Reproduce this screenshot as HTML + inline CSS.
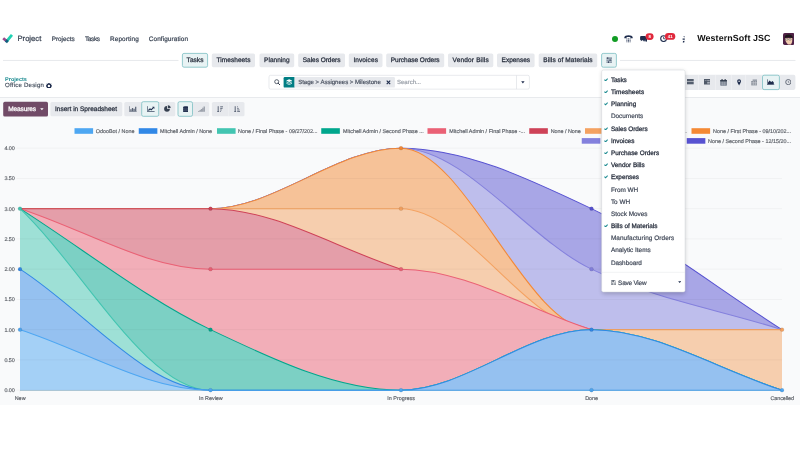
<!DOCTYPE html>
<html><head><meta charset="utf-8"><title>Project - Office Design</title>
<style>
html,body{margin:0;padding:0;background:#fff;}
body{width:800px;height:449px;position:relative;overflow:hidden;font-family:"Liberation Sans",Arial,sans-serif;-webkit-font-smoothing:antialiased;text-rendering:geometricPrecision;}
.t{position:absolute;white-space:nowrap;display:block;}
.b{position:absolute;display:block;}
</style></head><body><div id="root" style="position:absolute;left:0;top:0;width:800px;height:449px;will-change:transform;">
<svg class="b" style="left:0;top:30px" width="20" height="18" viewBox="0 30 20 18"><path d="M6.81 41.22 L11.95 34.8" stroke="#20d1b2" stroke-width="2.8" stroke-linecap="butt"/><path d="M3.2 38.2 L6.81 41.22" stroke="#9a4a8c" stroke-width="2.8"/><path d="M5.73 40.32 L7.89 42.12" stroke="#115f7e" stroke-width="2.8"/></svg>
<span id="t1" class="t " style="left:17.5px;top:33px;font-size:7.6px;line-height:12px;font-weight:400;color:#374151;-webkit-text-stroke:0.228px #374151;letter-spacing:0.018px;">Project</span>
<span id="t2" class="t " style="left:51.7px;top:34px;font-size:6.4px;line-height:12px;font-weight:400;color:#374151;-webkit-text-stroke:0.192px #374151;letter-spacing:-0.013px;">Projects</span>
<span id="t3" class="t " style="left:85px;top:34px;font-size:6.4px;line-height:12px;font-weight:400;color:#374151;-webkit-text-stroke:0.192px #374151;letter-spacing:-0.336px;">Tasks</span>
<span id="t4" class="t " style="left:110px;top:34px;font-size:6.4px;line-height:12px;font-weight:400;color:#374151;-webkit-text-stroke:0.192px #374151;letter-spacing:0.129px;">Reporting</span>
<span id="t5" class="t " style="left:148.75px;top:34px;font-size:6.4px;line-height:12px;font-weight:400;color:#374151;-webkit-text-stroke:0.192px #374151;letter-spacing:0.103px;">Configuration</span>
<div class="b" style="left:612px;top:35.6px;width:6px;height:6px;border-radius:50%;background:#119c24"></div>
<svg class="b" style="left:624.3px;top:35.2px;" width="9" height="7.8" viewBox="0 0 9 7.8">
<path d="M0.3 2.6 C0.3 0.9 2.4 0.2 4.5 0.2 C6.6 0.2 8.7 0.9 8.7 2.6 L8.7 3.3 L6.6 3.3 L6.4 2.2 C5.5 1.8 3.5 1.8 2.6 2.2 L2.4 3.3 L0.3 3.3 Z" fill="#1f2d4d"/>
<path d="M2.9 3.4 V7.3 M4.5 3.4 V7.3 M6.1 3.4 V7.3" stroke="#3a4763" stroke-width="0.95" stroke-dasharray="1.05 0.4"/>
</svg>
<svg class="b" style="left:639.6px;top:35.8px;" width="7.6" height="6.2" viewBox="0 0 7.6 6.2">
<path d="M0.1 1 Q0.1 0 1.1 0 L5 0 Q6 0 6 1 L6 3.2 Q6 4.2 5 4.2 L2.2 4.2 L0.9 5.2 L0.9 4.2 Q0.1 4.1 0.1 3.2 Z" fill="#1f2d4d"/>
<path d="M3 4.3 L5.9 4.3 L5.9 1.9 L6.8 1.9 Q7.4 1.9 7.4 2.5 L7.4 4.6 Q7.4 5.2 6.8 5.2 L6.6 5.2 L6.6 6.1 L5.6 5.2 L3.6 5.2 Q3 5.2 3 4.6 Z" fill="#1f2d4d"/>
</svg>
<svg class="b" style="left:644px;top:32px" width="11" height="9"><rect x="1.60" y="1.20" width="8.00" height="6.70" rx="3.40" fill="#e0283c"/></svg>
<span id="t6" class="t " style="left:648.5px;top:31px;font-size:4.3px;line-height:12px;font-weight:700;color:#fff;letter-spacing:-0.091px;">8</span>
<svg class="b" style="left:659.8px;top:35.3px;" width="7.2" height="7.2" viewBox="0 0 7.2 7.2"><circle cx="3.6" cy="3.6" r="2.9" fill="none" stroke="#1f2d4d" stroke-width="1.1"/><path d="M3.6 1.8 V3.8 H5" fill="none" stroke="#1f2d4d" stroke-width="0.8"/></svg>
<svg class="b" style="left:663px;top:32px" width="14" height="9"><rect x="1.90" y="1.10" width="10.40" height="6.70" rx="3.40" fill="#e0283c"/></svg>
<span id="t7" class="t " style="left:667.7px;top:31px;font-size:4.3px;line-height:12px;font-weight:700;color:#fff;letter-spacing:0.119px;">41</span>
<svg class="b" style="left:681.6px;top:35.6px;" width="3.4" height="7" viewBox="0 0 3.4 7"><path d="M1.2 0.6 L2.8 0.2 L2.4 1.6 Z M0.6 2.6 H2.8 V3.8 H0.6 Z M1 5 L2.6 4.8 L2.2 6.6 L0.8 6.4 Z" fill="#1f2d4d"/></svg>
<span id="t8" class="t " style="left:697.2px;top:32px;font-size:8.9px;line-height:12px;font-weight:700;color:#111;letter-spacing:0.104px;">WesternSoft JSC</span>
<svg class="b" style="left:782.9px;top:32.8px;" width="11.5" height="11.9" viewBox="0 0 11.5 11.9">
<rect x="0" y="0" width="11.5" height="11.9" rx="1.7" fill="#4f2145"/>
<path d="M2.2 5 Q2 9 5 11.4 L8 11.4 Q9.6 9 9.4 5 Z" fill="#f1cdb0"/>
<path d="M1.6 5.6 Q1.2 1.6 5.6 1.5 Q10 1.6 9.8 5.4 Q8.2 4 5.6 4.3 Q3 4 1.6 5.6Z" fill="#1c1718"/>
<rect x="2.6" y="5.4" width="2.3" height="1.6" rx="0.5" fill="#fff" fill-opacity=".6" stroke="#222" stroke-width="0.4"/>
<rect x="5.8" y="5.4" width="2.3" height="1.6" rx="0.5" fill="#fff" fill-opacity=".6" stroke="#222" stroke-width="0.4"/>

</svg>
<svg class="b" style="left:2px;top:58px" width="178" height="4"><rect x="1.00" y="1.95" width="175.50" height="0.80" rx="0.00" fill="#e1e4e8"/></svg>
<svg class="b" style="left:619px;top:58px" width="178" height="4"><rect x="1.00" y="1.95" width="175.50" height="0.80" rx="0.00" fill="#e1e4e8"/></svg>
<svg class="b" style="left:181px;top:52px" width="28" height="17"><rect x="1.40" y="1.40" width="25.20" height="13.80" rx="1.60" fill="#e8f3f4" stroke="#7cbfc3" stroke-width="0.8"/></svg>
<span id="t9" class="t " style="left:186.6px;top:55px;font-size:6.5px;line-height:12px;font-weight:400;color:#2b3240;-webkit-text-stroke:0.273px #2b3240;letter-spacing:0.044px;">Tasks</span>
<svg class="b" style="left:210px;top:52px" width="46" height="17"><rect x="1.80" y="1.40" width="43.20" height="13.80" rx="1.60" fill="#e7e9ed"/></svg>
<span id="t10" class="t " style="left:216.4px;top:55px;font-size:6.5px;line-height:12px;font-weight:400;color:#2b3240;-webkit-text-stroke:0.273px #2b3240;letter-spacing:0.071px;">Timesheets</span>
<svg class="b" style="left:258px;top:52px" width="38" height="17"><rect x="1.50" y="1.40" width="34.70" height="13.80" rx="1.60" fill="#e7e9ed"/></svg>
<span id="t11" class="t " style="left:264.1px;top:55px;font-size:6.5px;line-height:12px;font-weight:400;color:#2b3240;-webkit-text-stroke:0.273px #2b3240;letter-spacing:0.027px;">Planning</span>
<svg class="b" style="left:297px;top:52px" width="49" height="17"><rect x="1.20" y="1.40" width="46.80" height="13.80" rx="1.60" fill="#e7e9ed"/></svg>
<span id="t12" class="t " style="left:302.8px;top:55px;font-size:6.5px;line-height:12px;font-weight:400;color:#2b3240;-webkit-text-stroke:0.273px #2b3240;letter-spacing:-0.031px;">Sales Orders</span>
<svg class="b" style="left:347px;top:52px" width="37" height="17"><rect x="1.80" y="1.40" width="33.70" height="13.80" rx="1.60" fill="#e7e9ed"/></svg>
<span id="t13" class="t " style="left:353.40000000000003px;top:55px;font-size:6.5px;line-height:12px;font-weight:400;color:#2b3240;-webkit-text-stroke:0.273px #2b3240;letter-spacing:0.092px;">Invoices</span>
<svg class="b" style="left:385px;top:52px" width="61" height="17"><rect x="1.20" y="1.40" width="58.00" height="13.80" rx="1.60" fill="#e7e9ed"/></svg>
<span id="t14" class="t " style="left:390.8px;top:55px;font-size:6.5px;line-height:12px;font-weight:400;color:#2b3240;-webkit-text-stroke:0.273px #2b3240;letter-spacing:-0.024px;">Purchase Orders</span>
<svg class="b" style="left:447px;top:52px" width="48" height="17"><rect x="1.00" y="1.40" width="45.30" height="13.80" rx="1.60" fill="#e7e9ed"/></svg>
<span id="t15" class="t " style="left:452.6px;top:55px;font-size:6.5px;line-height:12px;font-weight:400;color:#2b3240;-webkit-text-stroke:0.273px #2b3240;letter-spacing:0.161px;">Vendor Bills</span>
<svg class="b" style="left:496px;top:52px" width="40" height="17"><rect x="1.00" y="1.40" width="37.60" height="13.80" rx="1.60" fill="#e7e9ed"/></svg>
<span id="t16" class="t " style="left:501.6px;top:55px;font-size:6.5px;line-height:12px;font-weight:400;color:#2b3240;-webkit-text-stroke:0.273px #2b3240;letter-spacing:-0.021px;">Expenses</span>
<svg class="b" style="left:537px;top:52px" width="62" height="17"><rect x="1.70" y="1.40" width="58.50" height="13.80" rx="1.60" fill="#e7e9ed"/></svg>
<span id="t17" class="t " style="left:543.3000000000001px;top:55px;font-size:6.5px;line-height:12px;font-weight:400;color:#2b3240;-webkit-text-stroke:0.273px #2b3240;letter-spacing:0.116px;">Bills of Materials</span>
<svg class="b" style="left:600px;top:52px" width="18" height="17"><rect x="1.60" y="1.40" width="14.80" height="13.80" rx="1.60" fill="#e8f3f4" stroke="#7cbfc3" stroke-width="0.8"/></svg>
<svg class="b" style="left:605.8px;top:57.3px;" width="6.6" height="6.2" viewBox="0 0 6.6 6.2"><path d="M0.4 1.1 H6.2 M0.4 3.1 H6.2 M0.4 5.1 H6.2" stroke="#1f2d4d" stroke-width="0.75"/>
<rect x="1.2" y="0.45" width="1" height="1.3" fill="#1f2d4d"/><rect x="3.6" y="2.45" width="1" height="1.3" fill="#1f2d4d"/><rect x="2" y="4.45" width="1" height="1.3" fill="#1f2d4d"/></svg>
<span id="t18" class="t " style="left:5.1px;top:74px;font-size:5.5px;line-height:12px;font-weight:700;color:#1a8a90;letter-spacing:0.012px;">Projects</span>
<span id="t19" class="t " style="left:5.1px;top:80px;font-size:6.1px;line-height:12px;font-weight:400;color:#4b5563;-webkit-text-stroke:0.183px #4b5563;letter-spacing:0.194px;">Office Design</span>
<svg class="b" style="left:45.9px;top:82.6px;" width="5.8" height="5.8" viewBox="0 0 5.8 5.8"><circle cx="2.9" cy="2.9" r="1.9" fill="none" stroke="#1f2d4d" stroke-width="1.4"/>
<path d="M2.9 0 V5.8 M0 2.9 H5.8 M0.85 0.85 L4.95 4.95 M4.95 0.85 L0.85 4.95" stroke="#1f2d4d" stroke-width="1" stroke-dasharray="0.9 4"/></svg>
<svg class="b" style="left:267px;top:74px" width="264" height="17"><rect x="2.00" y="1.30" width="260.40" height="13.85" rx="1.60" fill="#fff" stroke="#d9dce1" stroke-width="0.6"/></svg>
<svg class="b" style="left:273.6px;top:78.8px;" width="6.6" height="6.6" viewBox="0 0 6.6 6.6"><circle cx="2.7" cy="2.7" r="2" fill="none" stroke="#374151" stroke-width="0.8"/><path d="M4.2 4.2 L6 6" stroke="#374151" stroke-width="1" stroke-linecap="round"/></svg>
<svg class="b" style="left:282px;top:76px" width="14" height="13"><path d="M2.80 1.10 H12.60 Q12.60 1.10 12.60 1.10 V11.60 Q12.60 11.60 12.60 11.60 H2.80 Q1.60 11.60 1.60 10.40 V2.30 Q1.60 1.10 2.80 1.10 Z" fill="#017e84"/></svg>
<svg class="b" style="left:285.9px;top:79.4px;" width="6.4" height="6" viewBox="0 0 6.4 6"><path d="M3.2 0.2 L6.2 1.6 L3.2 3 L0.2 1.6 Z" fill="#fff"/><path d="M0.4 2.9 L3.2 4.2 L6 2.9 M0.4 4.3 L3.2 5.6 L6 4.3" fill="none" stroke="#fff" stroke-width="0.7"/></svg>
<svg class="b" style="left:293px;top:76px" width="103" height="13"><path d="M1.60 1.10 H100.70 Q101.90 1.10 101.90 2.30 V10.40 Q101.90 11.60 100.70 11.60 H1.60 Q1.60 11.60 1.60 11.60 V1.10 Q1.60 1.10 1.60 1.10 Z" fill="#e7e9ed"/></svg>
<span id="t20" class="t " style="left:298.2px;top:77px;font-size:6.1px;line-height:12px;font-weight:400;color:#4a5261;-webkit-text-stroke:0.183px #4a5261;letter-spacing:-0.039px;">Stage &gt; Assignees &gt; Milestone</span>
<svg class="b" style="left:385.6px;top:80.1px;" width="5" height="5" viewBox="0 0 5 5"><path d="M0.7 0.7 L4.2 4.2 M4.2 0.7 L0.7 4.2" stroke="#1f2d4d" stroke-width="1.15"/></svg>
<span id="t21" class="t " style="left:397px;top:77px;font-size:6.1px;line-height:12px;font-weight:400;color:#9aa0a9;-webkit-text-stroke:0.183px #9aa0a9;letter-spacing:-0.049px;">Search...</span>
<svg class="b" style="left:515px;top:74px" width="3" height="17"><rect x="1.30" y="1.40" width="0.60" height="13.70" rx="0.00" fill="#d9dce1"/></svg>
<svg class="b" style="left:521.2px;top:81px;" width="3.8" height="2.6" viewBox="0 0 3.8 2.6"><path d="M0.2 0.3 L3.6 0.3 L1.9 2.4 Z" fill="#1f2d4d"/></svg>
<svg class="b" style="left:682px;top:73px" width="115" height="18"><rect x="1.00" y="1.85" width="112.40" height="15.05" rx="1.80" fill="#e7e9ed"/></svg>
<svg class="b" style="left:697px;top:73px" width="3" height="18"><rect x="1.00" y="1.85" width="0.60" height="15.05" rx="0.00" fill="#f3f4f6"/></svg>
<svg class="b" style="left:714px;top:73px" width="3" height="18"><rect x="1.20" y="1.85" width="0.60" height="15.05" rx="0.00" fill="#f3f4f6"/></svg>
<svg class="b" style="left:730px;top:73px" width="3" height="18"><rect x="1.10" y="1.85" width="0.60" height="15.05" rx="0.00" fill="#f3f4f6"/></svg>
<svg class="b" style="left:744px;top:73px" width="3" height="18"><rect x="1.20" y="1.85" width="0.60" height="15.05" rx="0.00" fill="#f3f4f6"/></svg>
<svg class="b" style="left:760px;top:73px" width="4" height="18"><rect x="1.80" y="1.85" width="0.60" height="15.05" rx="0.00" fill="#f3f4f6"/></svg>
<svg class="b" style="left:778px;top:73px" width="4" height="18"><rect x="1.50" y="1.85" width="0.60" height="15.05" rx="0.00" fill="#f3f4f6"/></svg>
<svg class="b" style="left:761px;top:73px" width="20" height="18"><rect x="1.50" y="2.20" width="16.90" height="14.40" rx="1.60" fill="#e8f3f4" stroke="#7cbfc3" stroke-width="0.8"/></svg>
<svg class="b" style="left:687px;top:79.4px;" width="6.8" height="5.8" viewBox="0 0 6.8 5.8"><rect x="0" y="-0.2" width="6.7" height="2.5" fill="#545e6e"/><rect x="0" y="2.8" width="6.7" height="2.5" fill="#545e6e"/></svg>
<svg class="b" style="left:703.8px;top:79.3px;" width="6.6" height="5.8" viewBox="0 0 6.6 5.8"><rect x="0" y="0" width="6.5" height="5.5" fill="#4f5968"/><rect x="3.2" y="1.2" width="2.6" height="0.8" fill="#aab0ba"/><rect x="3.2" y="2.8" width="2.6" height="1.8" fill="#aab0ba"/><rect x="0.8" y="1.2" width="1.8" height="0.8" fill="#8b929d"/></svg>
<svg class="b" style="left:720.1px;top:78.7px;" width="7.2" height="7" viewBox="0 0 7.2 7"><rect x="0.2" y="1" width="6.8" height="5.8" rx="0.7" fill="#7a8391"/><rect x="0.2" y="1" width="6.8" height="1.4" fill="#3d4656"/><rect x="1.5" y="0" width="1.1" height="1.8" fill="#2b3445"/><rect x="4.6" y="0" width="1.1" height="1.8" fill="#2b3445"/><path d="M0.8 3.9 H6.4 M0.8 5.3 H6.4 M2.6 2.8 V6.5 M4.6 2.8 V6.5" stroke="#b9bec7" stroke-width="0.35"/></svg>
<svg class="b" style="left:736.9px;top:78.8px;" width="4.2" height="6.8" viewBox="0 0 4.2 6.8"><path d="M2.1 0.2 C3.3 0.2 4 1.1 4 2.2 C4 3.6 2.6 5.2 2.1 6.6 C1.6 5.2 0.2 3.6 0.2 2.2 C0.2 1.1 0.9 0.2 2.1 0.2 Z" fill="#1f2d4d"/><circle cx="2.1" cy="2.2" r="0.8" fill="#e7e9ed"/></svg>
<svg class="b" style="left:750.6px;top:78.8px;" width="6.8" height="6.8" viewBox="0 0 6.8 6.8"><rect x="1.6" y="0.4" width="4.6" height="2" fill="#9aa1ab"/><rect x="0.2" y="2" width="6.4" height="4.4" fill="#8b929d"/><path d="M0.2 3.5 H6.6 M0.2 5 H6.6 M2.4 2 V6.4 M4.5 2 V6.4" stroke="#d6d9de" stroke-width="0.4"/></svg>
<svg class="b" style="left:767.2px;top:79px;" width="7.6" height="6.4" viewBox="0 0 7.6 6.4"><path d="M0.3 0.3 V6 H7.4" fill="none" stroke="#1f2d4d" stroke-width="0.7"/><path d="M1 5.4 L1 3.4 L2.6 1.6 L4.2 3 L5.6 1.9 L6.8 3.4 L6.8 5.4 Z" fill="#1f2d4d"/></svg>
<svg class="b" style="left:784.6px;top:78.9px;" width="6.6" height="6.6" viewBox="0 0 6.6 6.6"><circle cx="3.3" cy="3.1" r="2.6" fill="none" stroke="#414a5a" stroke-width="0.75"/><path d="M3.3 1.8 V3.3 H4.3" fill="none" stroke="#414a5a" stroke-width="0.55"/></svg>
<div class="b" style="left:0px;top:96.7px;width:800px;height:308.3px;background:#f9fafb;border-top:0.6px solid #e8eaed;box-sizing:border-box;z-index:-1;"></div>
<svg class="b" style="left:2px;top:100px" width="47" height="18"><rect x="1.20" y="1.80" width="44.80" height="14.70" rx="1.60" fill="#714b67"/></svg>
<span id="t22" class="t " style="left:8.3px;top:104px;font-size:6.5px;line-height:12px;font-weight:400;color:#fff;-webkit-text-stroke:0.273px #fff;letter-spacing:-0.107px;">Measures</span>
<svg class="b" style="left:39.8px;top:108px;" width="3.8" height="2.6" viewBox="0 0 3.8 2.6"><path d="M0.2 0.3 L3.6 0.3 L1.9 2.3 Z" fill="#fff"/></svg>
<svg class="b" style="left:49px;top:101px" width="75" height="17"><rect x="1.40" y="1.00" width="71.90" height="14.30" rx="1.60" fill="#e7e9ed"/></svg>
<span id="t23" class="t " style="left:55px;top:104px;font-size:6.5px;line-height:12px;font-weight:400;color:#2b3240;-webkit-text-stroke:0.273px #2b3240;letter-spacing:0.01px;">Insert in Spreadsheet</span>
<svg class="b" style="left:123px;top:100px" width="54" height="18"><rect x="1.30" y="1.90" width="51.00" height="14.40" rx="1.60" fill="#e7e9ed"/></svg>
<svg class="b" style="left:140px;top:100px" width="21" height="18"><rect x="1.70" y="1.70" width="17.00" height="14.60" rx="1.60" fill="#e8f3f4" stroke="#7cbfc3" stroke-width="0.8"/></svg>
<svg class="b" style="left:129px;top:105.8px;" width="7.8" height="6" viewBox="0 0 7.8 6"><path d="M0.4 0.2 V5.6 H7.7" fill="none" stroke="#5b6577" stroke-width="0.65"/><path d="M1.9 5.2 V3.2 M3.5 5.2 V1.9 M5.1 5.2 V2.8 M6.7 5.2 V0.8" stroke="#5b6577" stroke-width="1.25"/></svg>
<svg class="b" style="left:146.9px;top:105.8px;" width="7.8" height="6" viewBox="0 0 7.8 6"><path d="M0.3 0.2 V5.6 H7.6" fill="none" stroke="#1f2d4d" stroke-width="0.7"/><path d="M1.4 4.5 L3 2.9 L4.2 3.8 L6.6 1.4" fill="none" stroke="#1f2d4d" stroke-width="1.15"/><path d="M5.2 0.7 H7.4 V2.9 Z" fill="#1f2d4d"/></svg>
<svg class="b" style="left:164.4px;top:105.4px;" width="6.8" height="6.8" viewBox="0 0 6.8 6.8"><path d="M3 0.9 V3.8 H5.9 A2.9 2.9 0 1 1 3 0.9 Z" fill="#374151"/><path d="M3.8 0.2 A2.9 2.9 0 0 1 6.7 3.1 H3.8 Z" fill="#374151"/></svg>
<svg class="b" style="left:176px;top:100px" width="35" height="18"><rect x="1.80" y="1.90" width="31.40" height="14.40" rx="1.60" fill="#e7e9ed"/></svg>
<svg class="b" style="left:176px;top:100px" width="18" height="18"><rect x="2.00" y="1.70" width="14.50" height="14.60" rx="1.60" fill="#e8f3f4" stroke="#7cbfc3" stroke-width="0.8"/></svg>
<svg class="b" style="left:182.6px;top:105.6px;" width="5.6" height="6.6" viewBox="0 0 5.6 6.6"><path d="M0.1 1.1 C0.1 -0.2 5.5 -0.2 5.5 1.1 V5.5 C5.5 6.8 0.1 6.8 0.1 5.5 Z" fill="#1f2d4d"/><path d="M0.1 2.5 C0.9 3.3 4.7 3.3 5.5 2.5 M0.1 4.2 C0.9 5 4.7 5 5.5 4.2" fill="none" stroke="#7d8697" stroke-width="0.45"/></svg>
<svg class="b" style="left:198.4px;top:105.8px;" width="6.8" height="6" viewBox="0 0 6.8 6"><path d="M0.1 5.8 V5 H1.4 V4 H2.8 V2.9 H4.2 V1.7 H5.5 V0.4 H6.8 V5.8 Z" fill="#8d939e"/><path d="M1.4 4 V5.8 M2.8 2.9 V5.8 M4.2 1.7 V5.8 M5.5 0.4 V5.8" stroke="#e7e9ed" stroke-width="0.3"/></svg>
<svg class="b" style="left:210px;top:100px" width="36" height="18"><rect x="1.90" y="1.90" width="32.60" height="14.40" rx="1.60" fill="#e7e9ed"/></svg>
<svg class="b" style="left:227px;top:100px" width="3" height="18"><rect x="1.00" y="1.90" width="0.40" height="14.40" rx="0.00" fill="#f4f5f7"/></svg>
<svg class="b" style="left:216.6px;top:105.6px;" width="6.4" height="6.8" viewBox="0 0 6.4 6.8"><path d="M1.2 0.2 V6.2" fill="none" stroke="#5b6577" stroke-width="1"/><path d="M0 4.9 L1.2 6.6 L2.4 4.9Z" fill="#5b6577"/><path d="M3.2 0.8 H6.4 M3.2 2.4 H5.6 M3.2 4 H4.7 M3.2 5.6 H4" stroke="#5b6577" stroke-width="0.9"/></svg>
<svg class="b" style="left:233.6px;top:105.6px;" width="6.4" height="6.8" viewBox="0 0 6.4 6.8"><path d="M1.2 0.2 V6.2" fill="none" stroke="#5b6577" stroke-width="1"/><path d="M0 4.9 L1.2 6.6 L2.4 4.9Z" fill="#5b6577"/><path d="M3.2 0.8 H4 M3.2 2.4 H4.7 M3.2 4 H5.6 M3.2 5.6 H6.4" stroke="#5b6577" stroke-width="0.9"/></svg>
<svg class="b" style="left:0;top:0" width="800" height="449" viewBox="0 0 800 449"><path d="M20 208.65C83.5 208.65 147 208.65 210.5 208.65C274 208.65 337.5 148.15 401 148.15C464.5 148.15 528 178.4 591.5 208.65C655 238.9 718.5 289.32 782 329.65L782 390.15L20 390.15Z" fill="#a8a6e6"/>
<path d="M20 208.65C83.5 208.65 147 208.65 210.5 208.65C274 208.65 337.5 148.15 401 148.15C464.5 148.15 528 178.4 591.5 208.65C655 238.9 718.5 289.32 782 329.65" fill="none" stroke="#5752D1" stroke-width="1.05"/>
<circle cx="591.5" cy="208.65" r="1.9" fill="#5752D1" stroke="rgba(0,0,0,0.2)" stroke-width="0.45"/>
<path d="M20 208.65C83.5 208.65 147 208.65 210.5 208.65C274 208.65 337.5 148.15 401 148.15C464.5 148.15 528 238.9 591.5 269.15C655 299.4 718.5 309.48 782 329.65L782 390.15L20 390.15Z" fill="#bebeec"/>
<path d="M20 208.65C83.5 208.65 147 208.65 210.5 208.65C274 208.65 337.5 148.15 401 148.15C464.5 148.15 528 238.9 591.5 269.15C655 299.4 718.5 309.48 782 329.65" fill="none" stroke="#8481DD" stroke-width="1.05"/>
<circle cx="591.5" cy="269.15" r="1.9" fill="#8481DD" stroke="rgba(0,0,0,0.2)" stroke-width="0.45"/>
<path d="M20 208.65C83.5 208.65 147 208.65 210.5 208.65C274 208.65 337.5 148.15 401 148.15C464.5 148.15 528 329.65 591.5 329.65C655 329.65 718.5 329.65 782 329.65L782 390.15L20 390.15Z" fill="#f6c298"/>
<path d="M20 208.65C83.5 208.65 147 208.65 210.5 208.65C274 208.65 337.5 148.15 401 148.15C464.5 148.15 528 329.65 591.5 329.65C655 329.65 718.5 329.65 782 329.65" fill="none" stroke="#F48935" stroke-width="1.05"/>
<circle cx="401" cy="148.15" r="1.9" fill="#F48935" stroke="rgba(0,0,0,0.2)" stroke-width="0.45"/>
<path d="M20 208.65C83.5 208.65 147 208.65 210.5 208.65C274 208.65 337.5 208.65 401 208.65C464.5 208.65 528 329.65 591.5 329.65C655 329.65 718.5 329.65 782 329.65L782 390.15L20 390.15Z" fill="#f6ceae"/>
<path d="M20 208.65C83.5 208.65 147 208.65 210.5 208.65C274 208.65 337.5 208.65 401 208.65C464.5 208.65 528 329.65 591.5 329.65C655 329.65 718.5 329.65 782 329.65" fill="none" stroke="#F4A261" stroke-width="1.05"/>
<circle cx="401" cy="208.65" r="1.9" fill="#F4A261" stroke="rgba(0,0,0,0.2)" stroke-width="0.45"/>
<circle cx="782" cy="329.65" r="1.9" fill="#F4A261" stroke="rgba(0,0,0,0.2)" stroke-width="0.45"/>
<path d="M20 208.65C83.5 208.65 147 208.65 210.5 208.65C274 208.65 337.5 248.98 401 269.15C464.5 289.32 528 309.48 591.5 329.65C655 349.82 718.5 369.98 782 390.15L782 390.15L20 390.15Z" fill="#e49ea9"/>
<path d="M20 208.65C83.5 208.65 147 208.65 210.5 208.65C274 208.65 337.5 248.98 401 269.15C464.5 289.32 528 309.48 591.5 329.65C655 349.82 718.5 369.98 782 390.15" fill="none" stroke="#CE4257" stroke-width="1.05"/>
<circle cx="210.5" cy="208.65" r="1.9" fill="#CE4257" stroke="rgba(0,0,0,0.2)" stroke-width="0.45"/>
<path d="M20 208.65C83.5 228.82 147 269.15 210.5 269.15C274 269.15 337.5 269.15 401 269.15C464.5 269.15 528 309.48 591.5 329.65C655 349.82 718.5 369.98 782 390.15L782 390.15L20 390.15Z" fill="#f2aeb8"/>
<path d="M20 208.65C83.5 228.82 147 269.15 210.5 269.15C274 269.15 337.5 269.15 401 269.15C464.5 269.15 528 309.48 591.5 329.65C655 349.82 718.5 369.98 782 390.15" fill="none" stroke="#EA6175" stroke-width="1.05"/>
<circle cx="210.5" cy="269.15" r="1.9" fill="#EA6175" stroke="rgba(0,0,0,0.2)" stroke-width="0.45"/>
<circle cx="401" cy="269.15" r="1.9" fill="#EA6175" stroke="rgba(0,0,0,0.2)" stroke-width="0.45"/>
<path d="M20 208.65C83.5 248.98 147 299.4 210.5 329.65C274 359.9 337.5 390.15 401 390.15C464.5 390.15 528 329.65 591.5 329.65C655 329.65 718.5 369.98 782 390.15L782 390.15L20 390.15Z" fill="#7cd0c4"/>
<path d="M20 208.65C83.5 248.98 147 299.4 210.5 329.65C274 359.9 337.5 390.15 401 390.15C464.5 390.15 528 329.65 591.5 329.65C655 329.65 718.5 369.98 782 390.15" fill="none" stroke="#00A78D" stroke-width="1.05"/>
<circle cx="210.5" cy="329.65" r="1.9" fill="#00A78D" stroke="rgba(0,0,0,0.2)" stroke-width="0.45"/>
<path d="M20 208.65C83.5 269.15 147 390.15 210.5 390.15C274 390.15 337.5 390.15 401 390.15C464.5 390.15 528 329.65 591.5 329.65C655 329.65 718.5 369.98 782 390.15L782 390.15L20 390.15Z" fill="#9ee0d6"/>
<path d="M20 208.65C83.5 269.15 147 390.15 210.5 390.15C274 390.15 337.5 390.15 401 390.15C464.5 390.15 528 329.65 591.5 329.65C655 329.65 718.5 369.98 782 390.15" fill="none" stroke="#43C5B1" stroke-width="1.05"/>
<circle cx="20" cy="208.65" r="1.9" fill="#43C5B1" stroke="rgba(0,0,0,0.2)" stroke-width="0.45"/>
<path d="M20 269.15C83.5 309.48 147 390.15 210.5 390.15C274 390.15 337.5 390.15 401 390.15C464.5 390.15 528 329.65 591.5 329.65C655 329.65 718.5 369.98 782 390.15L782 390.15L20 390.15Z" fill="#95c1f0"/>
<path d="M20 269.15C83.5 309.48 147 390.15 210.5 390.15C274 390.15 337.5 390.15 401 390.15C464.5 390.15 528 329.65 591.5 329.65C655 329.65 718.5 369.98 782 390.15" fill="none" stroke="#3188E6" stroke-width="1.05"/>
<circle cx="20" cy="269.15" r="1.9" fill="#3188E6" stroke="rgba(0,0,0,0.2)" stroke-width="0.45"/>
<circle cx="591.5" cy="329.65" r="1.9" fill="#3188E6" stroke="rgba(0,0,0,0.2)" stroke-width="0.45"/>
<path d="M20 329.65C83.5 349.82 147 390.15 210.5 390.15C274 390.15 337.5 390.15 401 390.15C464.5 390.15 528 390.15 591.5 390.15C655 390.15 718.5 390.15 782 390.15L782 390.15L20 390.15Z" fill="#a4d0f6"/>
<path d="M20 329.65C83.5 349.82 147 390.15 210.5 390.15C274 390.15 337.5 390.15 401 390.15C464.5 390.15 528 390.15 591.5 390.15C655 390.15 718.5 390.15 782 390.15" fill="none" stroke="#4EA7F2" stroke-width="1.05"/>
<circle cx="20" cy="329.65" r="1.9" fill="#4EA7F2" stroke="rgba(0,0,0,0.2)" stroke-width="0.45"/>
<circle cx="210.5" cy="390.15" r="1.9" fill="#4EA7F2" stroke="rgba(0,0,0,0.2)" stroke-width="0.45"/>
<circle cx="401" cy="390.15" r="1.9" fill="#4EA7F2" stroke="rgba(0,0,0,0.2)" stroke-width="0.45"/>
<circle cx="591.5" cy="390.15" r="1.9" fill="#4EA7F2" stroke="rgba(0,0,0,0.2)" stroke-width="0.45"/>
<circle cx="782" cy="390.15" r="1.9" fill="#4EA7F2" stroke="rgba(0,0,0,0.2)" stroke-width="0.45"/>
<path d="M16.4 390.15 H782" stroke="#000" stroke-opacity="0.07" stroke-width="0.5"/>
<path d="M16.4 359.90 H782" stroke="#000" stroke-opacity="0.07" stroke-width="0.5"/>
<path d="M16.4 329.65 H782" stroke="#000" stroke-opacity="0.07" stroke-width="0.5"/>
<path d="M16.4 299.40 H782" stroke="#000" stroke-opacity="0.07" stroke-width="0.5"/>
<path d="M16.4 269.15 H782" stroke="#000" stroke-opacity="0.07" stroke-width="0.5"/>
<path d="M16.4 238.90 H782" stroke="#000" stroke-opacity="0.07" stroke-width="0.5"/>
<path d="M16.4 208.65 H782" stroke="#000" stroke-opacity="0.07" stroke-width="0.5"/>
<path d="M16.4 178.40 H782" stroke="#000" stroke-opacity="0.07" stroke-width="0.5"/>
<path d="M16.4 148.15 H782" stroke="#000" stroke-opacity="0.07" stroke-width="0.5"/>
<path d="M20.00 390.4 V393.6" stroke="#000" stroke-opacity="0.07" stroke-width="0.5"/>
<path d="M210.50 390.4 V393.6" stroke="#000" stroke-opacity="0.07" stroke-width="0.5"/>
<path d="M401.00 390.4 V393.6" stroke="#000" stroke-opacity="0.07" stroke-width="0.5"/>
<path d="M591.50 390.4 V393.6" stroke="#000" stroke-opacity="0.07" stroke-width="0.5"/>
<path d="M782.00 390.4 V393.6" stroke="#000" stroke-opacity="0.07" stroke-width="0.5"/></svg>
<span id="t24" class="t " style="left:4.4px;top:385px;font-size:5.4px;line-height:12px;font-weight:400;color:#5b5f66;-webkit-text-stroke:0.162px #5b5f66;letter-spacing:-0.033px;">0.00</span>
<span id="t25" class="t " style="left:4.4px;top:355px;font-size:5.4px;line-height:12px;font-weight:400;color:#5b5f66;-webkit-text-stroke:0.162px #5b5f66;letter-spacing:-0.033px;">0.50</span>
<span id="t26" class="t " style="left:4.4px;top:325px;font-size:5.4px;line-height:12px;font-weight:400;color:#5b5f66;-webkit-text-stroke:0.162px #5b5f66;letter-spacing:-0.033px;">1.00</span>
<span id="t27" class="t " style="left:4.4px;top:294px;font-size:5.4px;line-height:12px;font-weight:400;color:#5b5f66;-webkit-text-stroke:0.162px #5b5f66;letter-spacing:-0.033px;">1.50</span>
<span id="t28" class="t " style="left:4.4px;top:264px;font-size:5.4px;line-height:12px;font-weight:400;color:#5b5f66;-webkit-text-stroke:0.162px #5b5f66;letter-spacing:-0.033px;">2.00</span>
<span id="t29" class="t " style="left:4.4px;top:234px;font-size:5.4px;line-height:12px;font-weight:400;color:#5b5f66;-webkit-text-stroke:0.162px #5b5f66;letter-spacing:-0.033px;">2.50</span>
<span id="t30" class="t " style="left:4.4px;top:204px;font-size:5.4px;line-height:12px;font-weight:400;color:#5b5f66;-webkit-text-stroke:0.162px #5b5f66;letter-spacing:-0.033px;">3.00</span>
<span id="t31" class="t " style="left:4.4px;top:173px;font-size:5.4px;line-height:12px;font-weight:400;color:#5b5f66;-webkit-text-stroke:0.162px #5b5f66;letter-spacing:-0.033px;">3.50</span>
<span id="t32" class="t " style="left:4.4px;top:143px;font-size:5.4px;line-height:12px;font-weight:400;color:#5b5f66;-webkit-text-stroke:0.162px #5b5f66;letter-spacing:-0.033px;">4.00</span>
<span id="t33" class="t " style="left:14.65px;top:393px;font-size:5.4px;line-height:12px;font-weight:400;color:#5b5f66;-webkit-text-stroke:0.162px #5b5f66;letter-spacing:0.052px;">New</span>
<span id="t34" class="t " style="left:199.05px;top:393px;font-size:5.4px;line-height:12px;font-weight:400;color:#5b5f66;-webkit-text-stroke:0.162px #5b5f66;letter-spacing:0.004px;">In Review</span>
<span id="t35" class="t " style="left:387.3px;top:393px;font-size:5.4px;line-height:12px;font-weight:400;color:#5b5f66;-webkit-text-stroke:0.162px #5b5f66;letter-spacing:0.002px;">In Progress</span>
<span id="t36" class="t " style="left:585.15px;top:393px;font-size:5.4px;line-height:12px;font-weight:400;color:#5b5f66;-webkit-text-stroke:0.162px #5b5f66;letter-spacing:0.003px;">Done</span>
<span id="t37" class="t " style="left:770.4px;top:393px;font-size:5.4px;line-height:12px;font-weight:400;color:#5b5f66;-webkit-text-stroke:0.162px #5b5f66;letter-spacing:-0.048px;">Cancelled</span>
<svg class="b" style="left:73px;top:127px" width="22" height="8"><rect x="1.50" y="1.20" width="18.60" height="5.60" rx="0.00" fill="#4EA7F2"/></svg>
<span id="t38" class="t " style="left:95.75px;top:126px;font-size:5.4px;line-height:12px;font-weight:400;color:#5b5f66;-webkit-text-stroke:0.162px #5b5f66;letter-spacing:0.006px;">OdooBot / None</span>
<svg class="b" style="left:137px;top:127px" width="22" height="8"><rect x="1.75" y="1.20" width="18.60" height="5.60" rx="0.00" fill="#3188E6"/></svg>
<span id="t39" class="t " style="left:160px;top:126px;font-size:5.4px;line-height:12px;font-weight:400;color:#5b5f66;-webkit-text-stroke:0.162px #5b5f66;letter-spacing:-0.007px;">Mitchell Admin / None</span>
<svg class="b" style="left:216px;top:127px" width="21" height="8"><rect x="1.00" y="1.20" width="18.60" height="5.60" rx="0.00" fill="#43C5B1"/></svg>
<span id="t40" class="t " style="left:238px;top:126px;font-size:5.4px;line-height:12px;font-weight:400;color:#5b5f66;-webkit-text-stroke:0.162px #5b5f66;letter-spacing:0.012px;">None / Final Phase - 09/27/202...</span>
<svg class="b" style="left:320px;top:127px" width="21" height="8"><rect x="1.25" y="1.20" width="18.60" height="5.60" rx="0.00" fill="#00A78D"/></svg>
<span id="t41" class="t " style="left:343px;top:126px;font-size:5.4px;line-height:12px;font-weight:400;color:#5b5f66;-webkit-text-stroke:0.162px #5b5f66;letter-spacing:0.014px;">Mitchell Admin / Second Phase ...</span>
<svg class="b" style="left:426px;top:127px" width="22" height="8"><rect x="1.50" y="1.20" width="18.60" height="5.60" rx="0.00" fill="#EA6175"/></svg>
<span id="t42" class="t " style="left:449.25px;top:126px;font-size:5.4px;line-height:12px;font-weight:400;color:#5b5f66;-webkit-text-stroke:0.162px #5b5f66;letter-spacing:0.008px;">Mitchell Admin / Final Phase -...</span>
<svg class="b" style="left:528px;top:127px" width="21" height="8"><rect x="1.25" y="1.20" width="18.60" height="5.60" rx="0.00" fill="#CE4257"/></svg>
<span id="t43" class="t " style="left:550.75px;top:126px;font-size:5.4px;line-height:12px;font-weight:400;color:#5b5f66;-webkit-text-stroke:0.162px #5b5f66;letter-spacing:-0.028px;">None / None</span>
<svg class="b" style="left:584px;top:127px" width="21" height="8"><rect x="1.00" y="1.20" width="18.60" height="5.60" rx="0.00" fill="#F4A261"/></svg>
<span id="t44" class="t " style="left:685.3px;top:126px;font-size:5.4px;line-height:12px;font-weight:400;color:#5b5f66;-webkit-text-stroke:0.162px #5b5f66;">.</span>
<svg class="b" style="left:690px;top:127px" width="22" height="8"><rect x="1.50" y="1.20" width="18.60" height="5.60" rx="0.00" fill="#F48935"/></svg>
<span id="t45" class="t " style="left:713px;top:126px;font-size:5.4px;line-height:12px;font-weight:400;color:#5b5f66;-webkit-text-stroke:0.162px #5b5f66;letter-spacing:0.002px;">None / First Phase - 09/10/202...</span>
<svg class="b" style="left:580px;top:137px" width="22" height="8"><rect x="1.75" y="1.10" width="18.60" height="5.60" rx="0.00" fill="#8481DD"/></svg>
<svg class="b" style="left:685px;top:137px" width="22" height="8"><rect x="1.75" y="1.10" width="18.60" height="5.60" rx="0.00" fill="#5752D1"/></svg>
<span id="t46" class="t " style="left:708px;top:136px;font-size:5.4px;line-height:12px;font-weight:400;color:#5b5f66;-webkit-text-stroke:0.162px #5b5f66;letter-spacing:0.009px;">None / Second Phase - 12/15/20...</span>
<div class="b" style="left:601.9px;top:70.3px;width:82.9px;height:221.4px;border-radius:2px;box-shadow:0 1.5px 4px rgba(0,0,0,0.2)"></div><svg class="b" style="left:600px;top:68px" width="87" height="226"><rect x="1.65" y="2.05" width="83.40" height="221.90" rx="1.80" fill="#fff" stroke="#d3d6da" stroke-width="0.5"/></svg>
<span id="t47" class="t " style="left:610.9px;top:75px;font-size:6.4px;line-height:12px;font-weight:400;color:#2b3240;-webkit-text-stroke:0.269px #2b3240;letter-spacing:-0.136px;">Tasks</span>
<svg class="b" style="left:604.3px;top:77.8px;" width="4.2" height="3.4" viewBox="0 0 4.2 3.4"><path d="M0.5 1.7 L1.6 2.8 L3.7 0.6" fill="none" stroke="#1a8a90" stroke-width="1.15"/></svg>
<span id="t48" class="t " style="left:610.9px;top:87px;font-size:6.4px;line-height:12px;font-weight:400;color:#2b3240;-webkit-text-stroke:0.269px #2b3240;letter-spacing:0.045px;">Timesheets</span>
<svg class="b" style="left:604.3px;top:89.98px;" width="4.2" height="3.4" viewBox="0 0 4.2 3.4"><path d="M0.5 1.7 L1.6 2.8 L3.7 0.6" fill="none" stroke="#1a8a90" stroke-width="1.15"/></svg>
<span id="t49" class="t " style="left:610.9px;top:99px;font-size:6.4px;line-height:12px;font-weight:400;color:#2b3240;-webkit-text-stroke:0.269px #2b3240;letter-spacing:0.075px;">Planning</span>
<svg class="b" style="left:604.3px;top:102.16px;" width="4.2" height="3.4" viewBox="0 0 4.2 3.4"><path d="M0.5 1.7 L1.6 2.8 L3.7 0.6" fill="none" stroke="#1a8a90" stroke-width="1.15"/></svg>
<span id="t50" class="t " style="left:610.9px;top:111px;font-size:6.4px;line-height:12px;font-weight:400;color:#414958;-webkit-text-stroke:0.192px #414958;letter-spacing:0.009px;">Documents</span>
<span id="t51" class="t " style="left:610.9px;top:124px;font-size:6.4px;line-height:12px;font-weight:400;color:#2b3240;-webkit-text-stroke:0.269px #2b3240;letter-spacing:-0.054px;">Sales Orders</span>
<svg class="b" style="left:604.3px;top:126.52px;" width="4.2" height="3.4" viewBox="0 0 4.2 3.4"><path d="M0.5 1.7 L1.6 2.8 L3.7 0.6" fill="none" stroke="#1a8a90" stroke-width="1.15"/></svg>
<span id="t52" class="t " style="left:610.9px;top:136px;font-size:6.4px;line-height:12px;font-weight:400;color:#2b3240;-webkit-text-stroke:0.269px #2b3240;">Invoices</span>
<svg class="b" style="left:604.3px;top:138.7px;" width="4.2" height="3.4" viewBox="0 0 4.2 3.4"><path d="M0.5 1.7 L1.6 2.8 L3.7 0.6" fill="none" stroke="#1a8a90" stroke-width="1.15"/></svg>
<span id="t53" class="t " style="left:610.9px;top:148px;font-size:6.4px;line-height:12px;font-weight:400;color:#2b3240;-webkit-text-stroke:0.269px #2b3240;">Purchase Orders</span>
<svg class="b" style="left:604.3px;top:150.88px;" width="4.2" height="3.4" viewBox="0 0 4.2 3.4"><path d="M0.5 1.7 L1.6 2.8 L3.7 0.6" fill="none" stroke="#1a8a90" stroke-width="1.15"/></svg>
<span id="t54" class="t " style="left:610.9px;top:160px;font-size:6.4px;line-height:12px;font-weight:400;color:#2b3240;-webkit-text-stroke:0.269px #2b3240;">Vendor Bills</span>
<svg class="b" style="left:604.3px;top:163.06px;" width="4.2" height="3.4" viewBox="0 0 4.2 3.4"><path d="M0.5 1.7 L1.6 2.8 L3.7 0.6" fill="none" stroke="#1a8a90" stroke-width="1.15"/></svg>
<span id="t55" class="t " style="left:610.9px;top:172px;font-size:6.4px;line-height:12px;font-weight:400;color:#2b3240;-webkit-text-stroke:0.269px #2b3240;">Expenses</span>
<svg class="b" style="left:604.3px;top:175.24px;" width="4.2" height="3.4" viewBox="0 0 4.2 3.4"><path d="M0.5 1.7 L1.6 2.8 L3.7 0.6" fill="none" stroke="#1a8a90" stroke-width="1.15"/></svg>
<span id="t56" class="t " style="left:610.9px;top:185px;font-size:6.4px;line-height:12px;font-weight:400;color:#414958;-webkit-text-stroke:0.192px #414958;">From WH</span>
<span id="t57" class="t " style="left:610.9px;top:197px;font-size:6.4px;line-height:12px;font-weight:400;color:#414958;-webkit-text-stroke:0.192px #414958;">To WH</span>
<span id="t58" class="t " style="left:610.9px;top:209px;font-size:6.4px;line-height:12px;font-weight:400;color:#414958;-webkit-text-stroke:0.192px #414958;">Stock Moves</span>
<span id="t59" class="t " style="left:610.9px;top:221px;font-size:6.4px;line-height:12px;font-weight:400;color:#2b3240;-webkit-text-stroke:0.269px #2b3240;">Bills of Materials</span>
<svg class="b" style="left:604.3px;top:223.96px;" width="4.2" height="3.4" viewBox="0 0 4.2 3.4"><path d="M0.5 1.7 L1.6 2.8 L3.7 0.6" fill="none" stroke="#1a8a90" stroke-width="1.15"/></svg>
<span id="t60" class="t " style="left:610.9px;top:233px;font-size:6.4px;line-height:12px;font-weight:400;color:#414958;-webkit-text-stroke:0.192px #414958;letter-spacing:0.078px;">Manufacturing Orders</span>
<span id="t61" class="t " style="left:610.9px;top:245px;font-size:6.4px;line-height:12px;font-weight:400;color:#414958;-webkit-text-stroke:0.192px #414958;">Analytic Items</span>
<span id="t62" class="t " style="left:610.9px;top:258px;font-size:6.4px;line-height:12px;font-weight:400;color:#414958;-webkit-text-stroke:0.192px #414958;letter-spacing:-0.046px;">Dashboard</span>
<svg class="b" style="left:600px;top:270px" width="86" height="4"><rect x="1.80" y="1.90" width="83.10" height="0.50" rx="0.00" fill="#e3e5e8"/></svg>
<svg class="b" style="left:610.6px;top:279.6px;" width="5.2" height="5.4" viewBox="0 0 5.2 5.4"><path d="M0.3 0.3 H3.8 L4.9 1.4 V5.1 H0.3 Z" fill="none" stroke="#4b5563" stroke-width="0.6"/><rect x="1.2" y="0.3" width="2" height="1.5" fill="#4b5563"/><rect x="1.2" y="3" width="2.8" height="2.1" fill="none" stroke="#4b5563" stroke-width="0.5"/></svg>
<span id="t63" class="t " style="left:618.1px;top:278px;font-size:6.4px;line-height:12px;font-weight:400;color:#414958;-webkit-text-stroke:0.192px #414958;letter-spacing:-0.21px;">Save View</span>
<svg class="b" style="left:678px;top:281.4px;" width="3.4" height="2.4" viewBox="0 0 3.4 2.4"><path d="M0.2 0.3 L3.2 0.3 L1.7 2.1 Z" fill="#1f2d4d"/></svg>
</div></body></html>
